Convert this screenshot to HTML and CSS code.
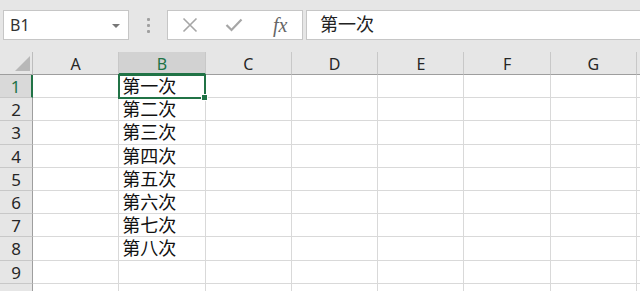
FILE: index.html
```html
<!DOCTYPE html>
<html lang="zh-CN">
<head>
  <meta charset="UTF-8">
  <meta name="viewport" content="width=device-width, initial-scale=1.0">
  <title>Sheet1</title>
  <link rel="stylesheet" href="styles.css">
</head>
<body>

  <div class="toolbar">
    <div class="name-box">
      <span>B1</span>
      <span class="caret"></span>
    </div>
    <div class="grip"><i></i><i></i><i></i></div>
    <div class="fx-box">
      <svg width="16" height="16" viewBox="0 0 16 16"><path d="M1.5 1.5 L14.5 14.5 M14.5 1.5 L1.5 14.5" stroke="#a6a6a6" stroke-width="1.6" fill="none"/></svg>
      <svg width="18" height="14" viewBox="0 0 18 14"><path d="M1.5 7 L6.5 12 L16.5 1.5" stroke="#a6a6a6" stroke-width="2.2" fill="none"/></svg>
      <span class="fx">fx</span>
    </div>
    <div class="formula">第一次</div>
  </div>

  <div class="sheet">
    <div class="corner"><span class="tri"></span></div>
    <div class="col-head">A</div>
    <div class="col-head sel">B</div>
    <div class="col-head">C</div>
    <div class="col-head">D</div>
    <div class="col-head">E</div>
    <div class="col-head">F</div>
    <div class="col-head">G</div>
    <div class="col-head"></div>

    <div class="row-head sel">1</div><div class="cell sel-row"></div><div class="cell">第一次</div><div class="cell"></div><div class="cell"></div><div class="cell"></div><div class="cell"></div><div class="cell"></div><div class="cell"></div>
    <div class="row-head">2</div><div class="cell"></div><div class="cell">第二次</div><div class="cell"></div><div class="cell"></div><div class="cell"></div><div class="cell"></div><div class="cell"></div><div class="cell"></div>
    <div class="row-head">3</div><div class="cell"></div><div class="cell">第三次</div><div class="cell"></div><div class="cell"></div><div class="cell"></div><div class="cell"></div><div class="cell"></div><div class="cell"></div>
    <div class="row-head">4</div><div class="cell"></div><div class="cell">第四次</div><div class="cell"></div><div class="cell"></div><div class="cell"></div><div class="cell"></div><div class="cell"></div><div class="cell"></div>
    <div class="row-head">5</div><div class="cell"></div><div class="cell">第五次</div><div class="cell"></div><div class="cell"></div><div class="cell"></div><div class="cell"></div><div class="cell"></div><div class="cell"></div>
    <div class="row-head">6</div><div class="cell"></div><div class="cell">第六次</div><div class="cell"></div><div class="cell"></div><div class="cell"></div><div class="cell"></div><div class="cell"></div><div class="cell"></div>
    <div class="row-head">7</div><div class="cell"></div><div class="cell">第七次</div><div class="cell"></div><div class="cell"></div><div class="cell"></div><div class="cell"></div><div class="cell"></div><div class="cell"></div>
    <div class="row-head">8</div><div class="cell"></div><div class="cell">第八次</div><div class="cell"></div><div class="cell"></div><div class="cell"></div><div class="cell"></div><div class="cell"></div><div class="cell"></div>
    <div class="row-head">9</div><div class="cell"></div><div class="cell"></div><div class="cell"></div><div class="cell"></div><div class="cell"></div><div class="cell"></div><div class="cell"></div><div class="cell"></div>
    <div class="row-head"></div><div class="cell"></div><div class="cell"></div><div class="cell"></div><div class="cell"></div><div class="cell"></div><div class="cell"></div><div class="cell"></div><div class="cell"></div>

    <div class="selection"><span class="handle"></span></div>
  </div>

</body>
</html>
```

FILE: styles.css
```css
body {
  margin: 0;
  width: 640px;
  height: 291px;
  overflow: hidden;
  background: #e6e6e6;
  font-family: 'Noto Sans', 'Noto Sans CJK SC', sans-serif;
  color: #222;
}

.toolbar {
  height: 52px;
  display: flex;
  align-items: flex-start;
  padding-top: 10px;
  box-sizing: border-box;
}

.name-box {
  margin-left: 3px;
  width: 126px;
  height: 30px;
  box-sizing: border-box;
  background: #fff;
  border: 1px solid #c6c6c6;
  display: flex;
  align-items: center;
  justify-content: space-between;
  padding: 0 8px 0 6px;
  font-size: 16px;
  color: #333;
}

.caret {
  width: 0;
  height: 0;
  border-left: 4px solid transparent;
  border-right: 4px solid transparent;
  border-top: 4px solid #777;
  margin-top: 1px;
}

.grip {
  width: 38px;
  height: 30px;
  display: flex;
  flex-direction: column;
  align-items: center;
  justify-content: center;
  gap: 3px;
}

.grip i {
  width: 3px;
  height: 3px;
  background: #a0a0a0;
  border-radius: 1px;
}

.fx-box {
  width: 136px;
  height: 30px;
  box-sizing: border-box;
  background: #fff;
  border: 1px solid #c6c6c6;
  display: flex;
  align-items: center;
  padding-left: 14px;
  gap: 27px;
}

.fx {
  font-family: 'Liberation Serif', serif;
  font-style: italic;
  font-size: 20px;
  color: #666;
  margin-left: 3px;
}

.formula {
  margin-left: 3px;
  flex: 1;
  height: 30px;
  box-sizing: border-box;
  background: #fff;
  border: 1px solid #c6c6c6;
  border-right: none;
  padding-left: 13px;
  font-size: 18px;
  line-height: 27px;
  color: #222;
}

.sheet {
  position: relative;
  display: grid;
  grid-template-columns: 33px repeat(7, 86.3px) 1fr;
  grid-template-rows: 23px repeat(9, 23.2px) 8px;
  background: #fff;
  overflow: hidden;
}

.corner,
.col-head,
.row-head {
  background: #e6e6e6;
  box-sizing: border-box;
}

.corner {
  border-right: 1px solid #bdbdbd;
  border-bottom: 1px solid #9e9e9e;
  position: relative;
}

.tri {
  position: absolute;
  right: 2px;
  bottom: 3px;
  width: 0;
  height: 0;
  border-left: 15px solid transparent;
  border-bottom: 15px solid #b8b8b8;
}

.col-head {
  border-right: 1px solid #c8c8c8;
  border-bottom: 1px solid #9e9e9e;
  text-align: center;
  font-size: 16px;
  line-height: 25px;
  color: #262626;
}

.col-head.sel {
  background: #d2d2d2;
  color: #217346;
  border-bottom: 2px solid #217346;
}

.row-head {
  border-right: 1px solid #9e9e9e;
  border-bottom: 1px solid #c8c8c8;
  text-align: center;
  font-size: 17px;
  line-height: 23px;
  color: #262626;
  background: #e6e6e6;
}

.row-head.sel {
  background: #d9d9d9;
  color: #217346;
  border-right: 2px solid #217346;
}

.cell {
  border-right: 1px solid #d9d9d9;
  border-bottom: 1px solid #d9d9d9;
  box-sizing: border-box;
  font-size: 18px;
  line-height: 23px;
  padding-left: 3px;
  color: #111;
  white-space: nowrap;
  overflow: hidden;
}

.selection {
  position: absolute;
  left: 118px;
  top: 22px;
  width: 88px;
  height: 25px;
  box-sizing: border-box;
  border: 2px solid #217346;
}

.handle {
  position: absolute;
  right: -4px;
  bottom: -4px;
  width: 5px;
  height: 5px;
  background: #217346;
  border: 1px solid #fff;
}
```
